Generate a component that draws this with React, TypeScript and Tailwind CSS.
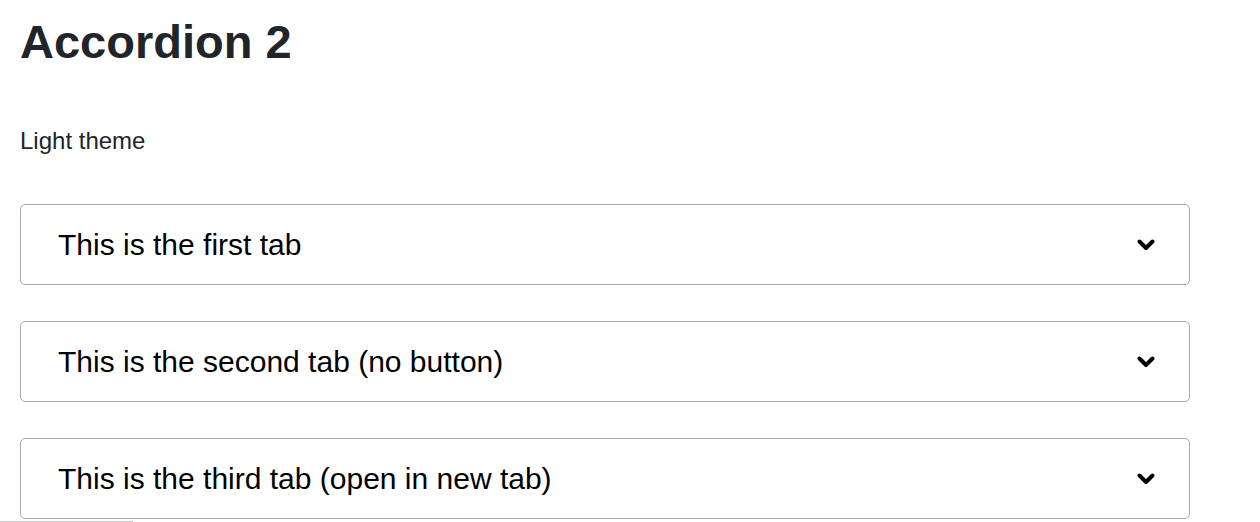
import React from 'react';

const Chevron = () => (
  <svg width="18" height="12" viewBox="0 0 18 12" fill="none" className="text-black">
    <polyline points="2.5,2.5 9,9 15.5,2.5" stroke="currentColor" strokeWidth="4" strokeLinecap="round" strokeLinejoin="round" />
  </svg>
);

const AccordionDemo = () => {
  const tabs = [
    'This is the first tab',
    'This is the second tab (no button)',
    'This is the third tab (open in new tab)'
  ];

  return (
    <div className="min-h-screen bg-white px-5 font-['Liberation_Sans',Arial,sans-serif]">
      <h1 className="pt-[14px] text-[47px] font-bold leading-[56px] text-[#212529]">Accordion 2</h1>

      <p className="mt-[57px] text-[24px] leading-[28px] text-[#212529]">Light theme</p>

      <div className="mt-[49px] flex w-[1170px] flex-col gap-[36px]">
        {tabs.map((tab, index) => (
          <div
            key={index}
            className="flex h-[81px] items-center justify-between rounded-[5px] border border-[#aaaaaa] pl-[37px] pr-[34px]"
          >
            <span className="text-[30px] text-black">{tab}</span>
            <Chevron />
          </div>
        ))}
      </div>

      <div className="-ml-5 mt-[2px] w-[133px] border-t border-[#cccccc]" />
    </div>
  );
};

export default AccordionDemo;
